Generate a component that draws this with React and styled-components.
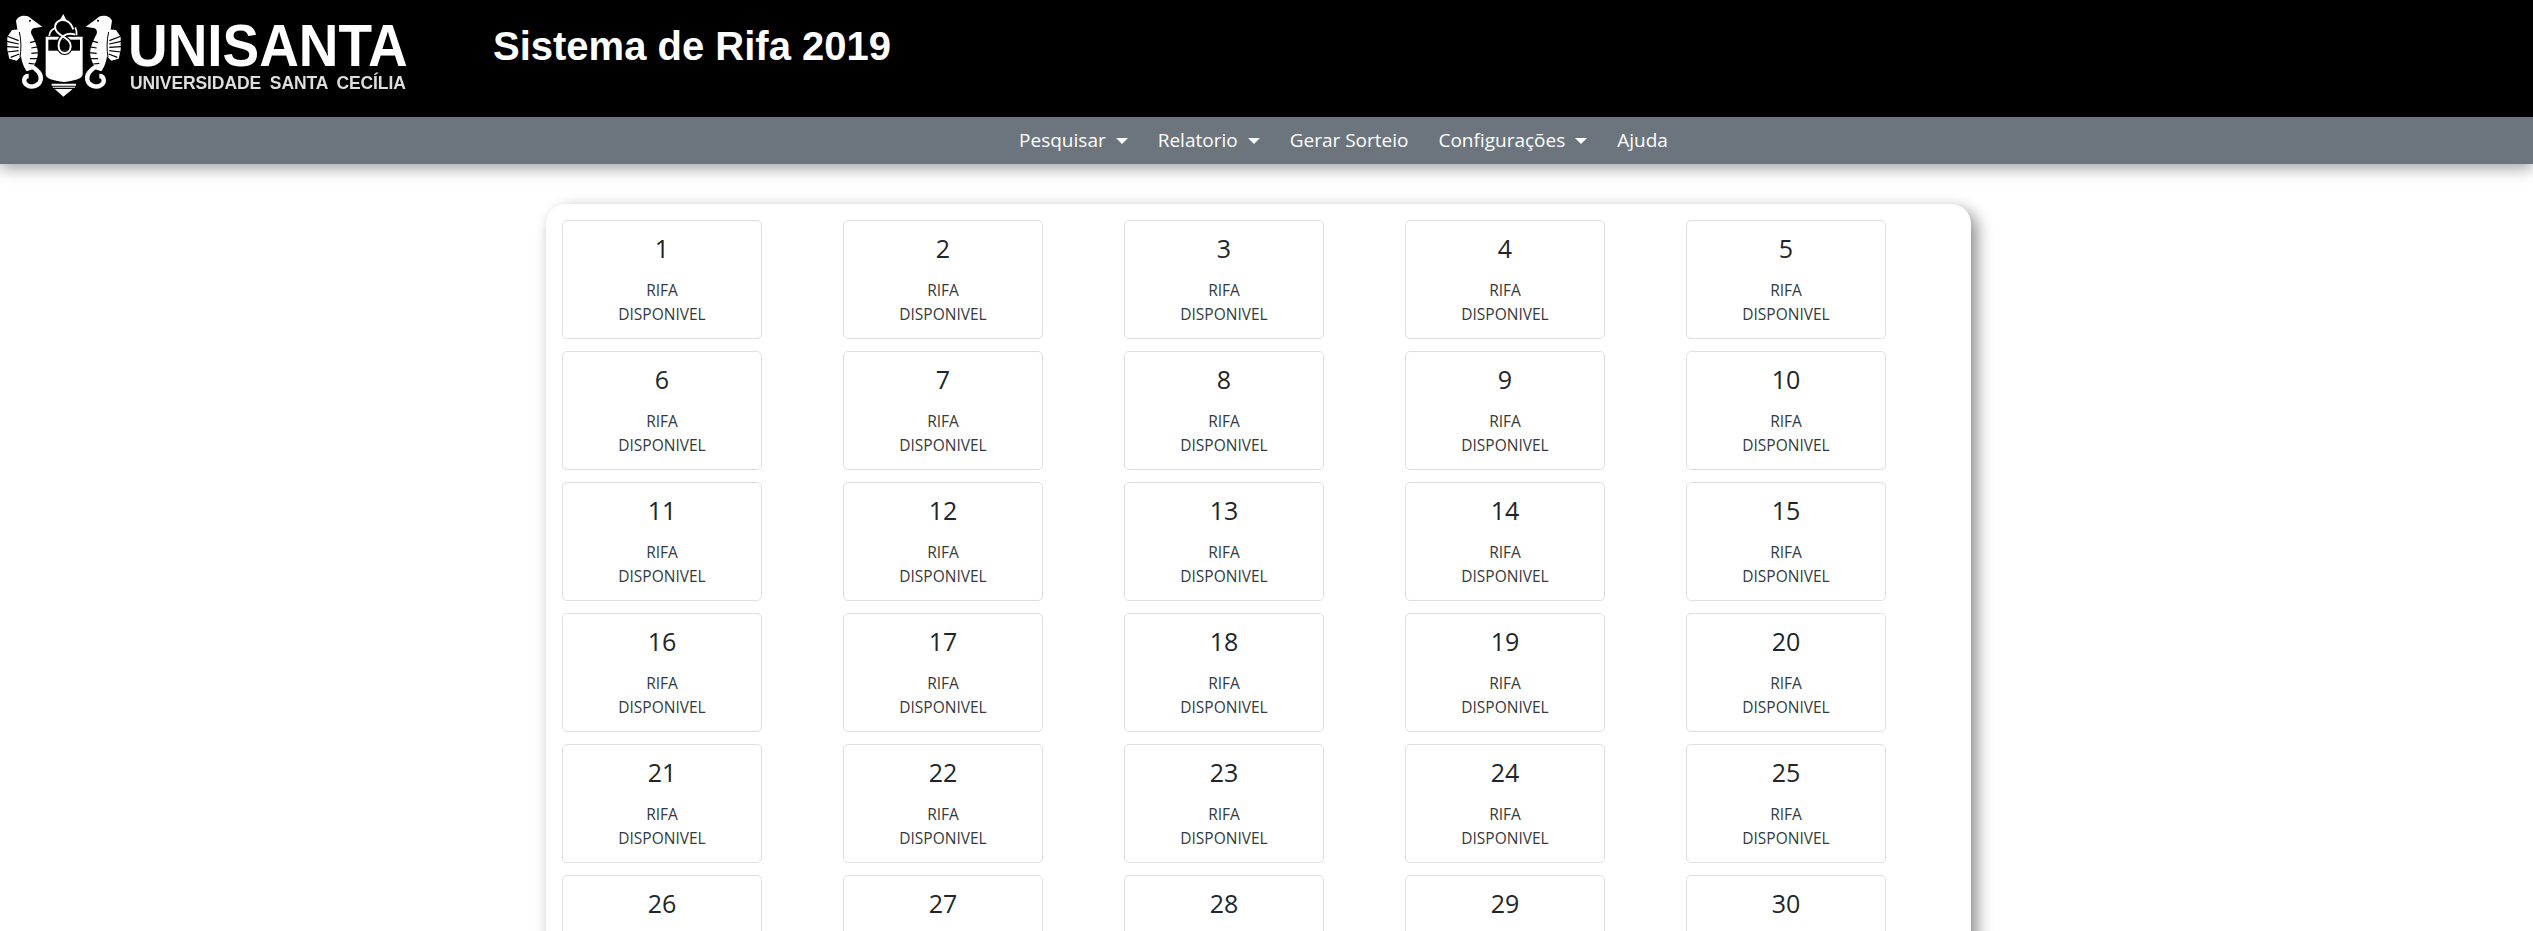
import styled, { createGlobalStyle } from 'styled-components';

const GlobalStyle = createGlobalStyle`
  html, body {
    margin: 0;
    height: 100%;
    overflow: hidden;
    background: #fff;
    font-family: "Open Sans", "Noto Sans", sans-serif;
    color: #212529;
  }
`;

const rifas = Array.from({ length: 50 }, (_, i) => i + 1);
const menu = [
  { label: 'Pesquisar', caret: true },
  { label: 'Relatorio', caret: true },
  { label: 'Gerar Sorteio' },
  { label: 'Configurações', caret: true },
  { label: 'Ajuda' },
];

const knot = 'M220 88 C206 46 160 56 166 86 C172 110 214 112 212 140 C210 166 178 164 176 140 C174 114 196 94 226 104';

const Seahorse = () => (
  <g>
    {/* fin */}
    <path d="M60 88 L36 90 L22 110 L22 150 L28 176 L50 182 L68 164 Z" fill="#fff" />
    <path d="M56 122 L20 108 M56 132 L20 124 M56 142 L20 140 M56 152 L22 156 M58 162 L32 172" stroke="#000" strokeWidth="3.5" />
    {/* head and body */}
    <path d="M48 62 C54 46 82 40 96 58 L127 80 L100 85 C94 88 92 94 94 102 C106 124 118 150 112 172 C108 188 100 198 98 208 L80 214 C68 196 62 176 62 150 C62 128 60 106 52 88 Z" fill="#fff" />
    <path d="M58 96 C64 120 64 150 60 172" fill="none" stroke="#000" strokeWidth="3" />
    {/* tail curl */}
    <path d="M90 196 C112 208 126 222 122 240 C118 258 96 264 82 256 C68 248 70 228 86 228" fill="none" stroke="#fff" strokeWidth="13" />
    {/* belly ridges */}
    <path d="M112 122 L90 128 M118 140 L94 144 M118 158 L94 160 M112 176 L90 176 M104 192 L86 190" stroke="#000" strokeWidth="3.5" />
    <circle cx="90" cy="62" r="3" fill="#000" />
  </g>
);

const LogoMark = () => (
  <svg width="135" height="105" viewBox="0 0 405 315">
    <Seahorse />
    <g transform="matrix(-1 0 0 1 384 0)">
      <Seahorse />
    </g>
    <path d="M137 110 H248 V222 C248 236 226 242 192 246 C158 242 137 236 137 222 Z" fill="#fff" />
    <rect x="145" y="119" width="95" height="33" fill="#000" />
    <path d="M155 251 H228 V257 H155 Z M158 260 H225 V263 H158 Z M164 267 H218 L190 290 Z" fill="#fff" />
    <path d={knot} fill="none" stroke="#000" strokeWidth="13" />
    <path d={knot} fill="none" stroke="#fff" strokeWidth="6" />
    <path d="M190 42 L200 62 L178 62 Z" fill="#fff" />
    <path d="M166 84 C152 90 148 96 148 108 M226 82 C230 90 230 96 230 106" fill="none" stroke="#fff" strokeWidth="5" />
  </svg>
);

export default function App() {
  return (
    <>
      <GlobalStyle />
      <Header>
        <Logo>
          <LogoMark />
          <Wordmark>
            <WordmarkName>UNISANTA</WordmarkName>
            <WordmarkSub>UNIVERSIDADE SANTA CECÍLIA</WordmarkSub>
          </Wordmark>
        </Logo>
        <Title>Sistema de Rifa 2019</Title>
      </Header>
      <Navbar>
        {menu.map((item) => (
          <NavLink key={item.label} $caret={item.caret}>{item.label}</NavLink>
        ))}
      </Navbar>
      <Main>
        <Panel>
          {rifas.map((n) => (
            <Cell key={n}>
              <Card>
                <Numero>{n}</Numero>
                <Status>RIFA<br />DISPONIVEL</Status>
              </Card>
            </Cell>
          ))}
        </Panel>
      </Main>
    </>
  );
}

const Header = styled.header`
  display: flex;
  align-items: flex-start;
  height: 117px;
  background: #000;
  color: #fff;
`;
const Logo = styled.div`
  display: flex;
  width: 493px;
  height: 105px;
`;
const Wordmark = styled.div`
  display: flex;
  flex-direction: column;
  margin-left: -5px;
  padding-top: 19px;
  font-family: "Liberation Sans", Arial, sans-serif;
  filter: blur(0.5px);
`;
const WordmarkName = styled.div`
  margin-left: -2px;
  font-size: 60px;
  line-height: 54px;
  font-weight: 700;
  transform: scaleX(0.915);
  transform-origin: left center;
`;
const WordmarkSub = styled.div`
  font-size: 17.5px;
  line-height: 20px;
  font-weight: 700;
  letter-spacing: -0.1px;
  word-spacing: 4px;
  color: #dedede;
  white-space: nowrap;
`;
const Title = styled.h1`
  margin: 22px 0 0;
  font-family: "Liberation Sans", Arial, sans-serif;
  font-size: 40px;
  line-height: 48px;
  font-weight: 700;
`;
const Navbar = styled.nav`
  display: flex;
  justify-content: center;
  align-items: center;
  height: 47px;
  padding-left: 154px;
  background: #6c757d;
  box-shadow: 0 5px 14px rgba(0, 0, 0, 0.35);
  position: relative;
`;
const NavLink = styled.a`
  padding: 0 15px;
  font-size: 19px;
  line-height: 47px;
  color: #fff;
  white-space: nowrap;
  &::after {
    content: ${(p) => (p.$caret ? '""' : 'none')};
    display: inline-block;
    margin-left: 10px;
    vertical-align: 3px;
    border-top: 6px solid #fff;
    border-left: 6px solid transparent;
    border-right: 6px solid transparent;
  }
`;
const Main = styled.main`
  padding: 40px 0 0 546px;
`;
const Panel = styled.section`
  display: grid;
  grid-template-columns: repeat(5, 281px);
  row-gap: 12px;
  box-sizing: border-box;
  width: 1425px;
  padding: 16px 4px 16px 16px;
  background: #fff;
  border-radius: 20px;
  box-shadow: 6px 6px 16px rgba(0, 0, 0, 0.45);
`;
const Cell = styled.div`
  width: 281px;
`;
const Card = styled.div`
  box-sizing: border-box;
  width: 200px;
  height: 119px;
  padding-top: 9px;
  border: 1px solid rgba(0, 0, 0, 0.125);
  border-radius: 5px;
  text-align: center;
`;
const Numero = styled.div`
  font-size: 25px;
  line-height: 36px;
  font-weight: 500;
`;
const Status = styled.p`
  margin: 12px 0 0;
  font-size: 15.5px;
  line-height: 24px;
  color: #343a40;
`;
